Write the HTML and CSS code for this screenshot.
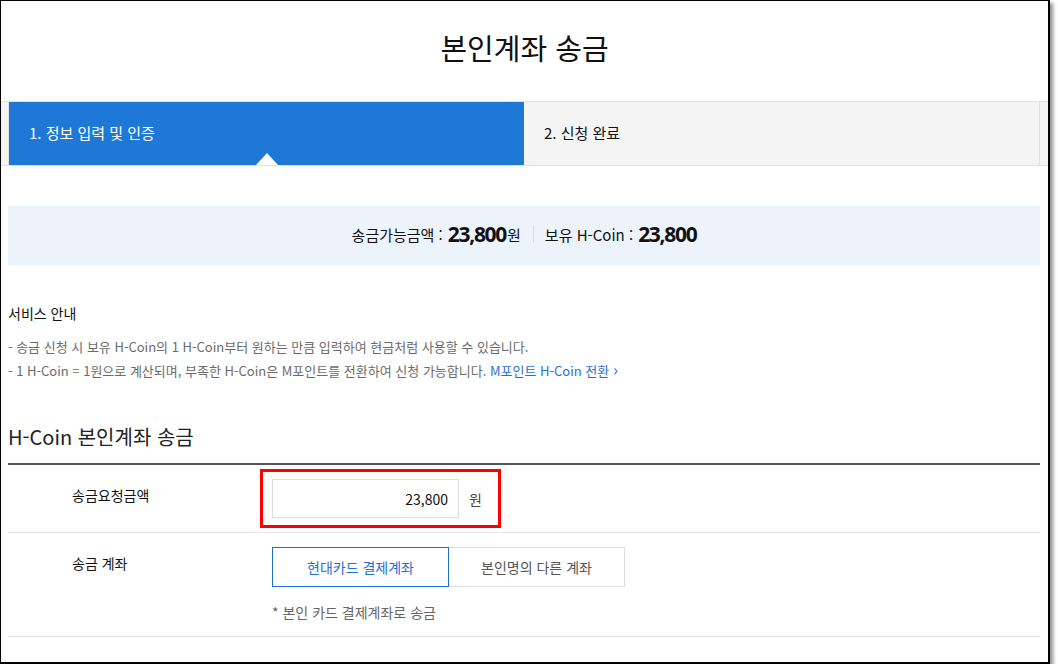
FILE: index.html
```html
<!DOCTYPE html>
<html lang="ko">
<head>
  <meta charset="UTF-8">
  <title>본인계좌 송금</title>
  <link rel="stylesheet" href="styles.css">
</head>
<body>
  <div class="frame">
    <h1 class="page-title">본인계좌 송금</h1>

    <div class="steps">
      <ul>
        <li class="on">1. 정보 입력 및 인증</li>
        <li>2. 신청 완료</li>
      </ul>
    </div>

    <div class="wrap">
      <div class="balance">
        <span class="lbl">송금가능금액 :</span>
        <strong class="num">23,800</strong><span class="won">원</span>
        <span class="bar"></span>
        <span class="lbl">보유 H-Coin :</span>
        <strong class="num">23,800</strong>
      </div>

      <div class="notice">
        <h3>서비스 안내</h3>
        <p>- 송금 신청 시 보유 H-Coin의 1 H-Coin부터 원하는 만큼 입력하여 현금처럼 사용할 수 있습니다.</p>
        <p>- 1 H-Coin = 1원으로 계산되며, 부족한 H-Coin은 M포인트를 전환하여 신청 가능합니다. <a href="#">M포인트 H-Coin 전환 <span class="arr">›</span></a></p>
      </div>

      <h2 class="sec-title">H-Coin 본인계좌 송금</h2>
      <div class="form">
        <div class="row">
          <div class="th">송금요청금액</div>
          <div class="td">
            <div class="mark">
              <input class="amount" type="text" value="23,800">
              <span class="unit">원</span>
            </div>
          </div>
        </div>
        <div class="row">
          <div class="th">송금 계좌</div>
          <div class="td">
            <div class="tabs">
              <button class="tab sel">현대카드 결제계좌</button>
              <button class="tab">본인명의 다른 계좌</button>
            </div>
            <p class="desc">* 본인 카드 결제계좌로 송금</p>
          </div>
        </div>
      </div>
    </div>
  </div>
</body>
</html>
```

FILE: styles.css
```css
body {
  margin: 0;
  background: #fff;
  font-family: "Noto Sans CJK KR", "Noto Sans", sans-serif;
  color: #111;
}
.frame {
  width: 1047px;
  height: 661px;
  border-top: 1px solid #000;
  border-left: 1px solid #000;
  border-right: 2px solid #000;
  border-bottom: 2px solid #000;
  box-shadow: 3px 3px 4px rgba(0,0,0,0.45);
  background: #fff;
  overflow: hidden;
}
.page-title {
  margin: 0;
  height: 100px;
  line-height: 92px;
  text-align: center;
  font-size: 29px;
  font-weight: normal;
}
.steps {
  background: #f4f4f4;
  border-top: 1px solid #e0e0e0;
  border-bottom: 1px solid #e0e0e0;
}
.steps ul {
  display: flex;
  margin: 0 8px 0 7px;
  padding: 0;
  list-style: none;
  border-left: 1px solid #e0e0e0;
  border-right: 1px solid #e0e0e0;
}
.steps li {
  flex: 1;
  height: 63px;
  line-height: 62px;
  padding-left: 20px;
  font-size: 15px;
}
.steps li.on {
  position: relative;
  background: #1f77d6;
  color: #fff;
}
.steps li.on:after {
  content: "";
  position: absolute;
  left: 247px;
  bottom: 0;
  border-left: 11px solid transparent;
  border-right: 11px solid transparent;
  border-bottom: 12px solid #fff;
}
.wrap {
  padding: 0 8px 0 7px;
}
.balance {
  margin-top: 40px;
  height: 59px;
  background: #edf3fa;
  display: flex;
  align-items: center;
  justify-content: center;
  font-size: 15px;
  padding-bottom: 3px;
  box-sizing: border-box;
}
.balance .num {
  font-family: "Noto Sans", sans-serif;
  font-size: 21px;
  font-weight: bold;
  margin-left: 5px;
  letter-spacing: -1.3px;
}
.balance .won {
  margin-left: 1px;
}
.balance .bar {
  width: 1px;
  height: 18px;
  background: #d6dce4;
  margin: 0 11px 0 12px;
}
.notice {
  margin-top: 38px;
}
.notice h3 {
  margin: 0 0 12px;
  font-size: 14px;
  font-weight: normal;
  line-height: 20px;
}
.notice p {
  margin: 0;
  font-size: 13px;
  line-height: 24px;
  color: #6b6b6b;
}
.notice a {
  color: #1f73d3;
  text-decoration: none;
}
.notice .arr {
  font-size: 16px;
  line-height: 1;
}
.sec-title {
  margin: 40px 0 0;
  font-size: 20px;
  font-weight: normal;
  line-height: 28px;
  color: #222;
  padding-bottom: 12px;
  border-bottom: 2px solid #555;
}
.row {
  display: flex;
  padding: 14px 0;
  border-bottom: 1px solid #e6e6e6;
}
.th {
  width: 200px;
  padding: 6px 0 0 64px;
  font-size: 14px;
  line-height: 20px;
}
.td {
  flex: 1;
}
.mark {
  position: relative;
  display: inline-flex;
  align-items: center;
}
.mark:before {
  content: "";
  position: absolute;
  top: -10px;
  bottom: -10px;
  left: -12px;
  right: -19px;
  border: 3px solid #f00;
}
.amount {
  width: 187px;
  height: 39px;
  box-sizing: border-box;
  border: 1px solid #ddd;
  padding: 0 10px;
  text-align: right;
  font-family: inherit;
  font-size: 14px;
  color: #111;
}
.unit {
  margin-left: 10px;
  font-size: 14px;
  color: #444;
}
.tabs {
  display: flex;
}
.tab {
  width: 176px;
  height: 40px;
  background: #fff;
  border: 1px solid #ddd;
  font-family: inherit;
  font-size: 14px;
  color: #555;
  cursor: pointer;
}
.tab.sel {
  width: 177px;
  border-color: #1f6fd0;
  color: #1f6fd0;
}
.tab + .tab {
  border-left: none;
}
.desc {
  margin: 15px 0 0;
  font-size: 14px;
  line-height: 20px;
  color: #666;
}
```
